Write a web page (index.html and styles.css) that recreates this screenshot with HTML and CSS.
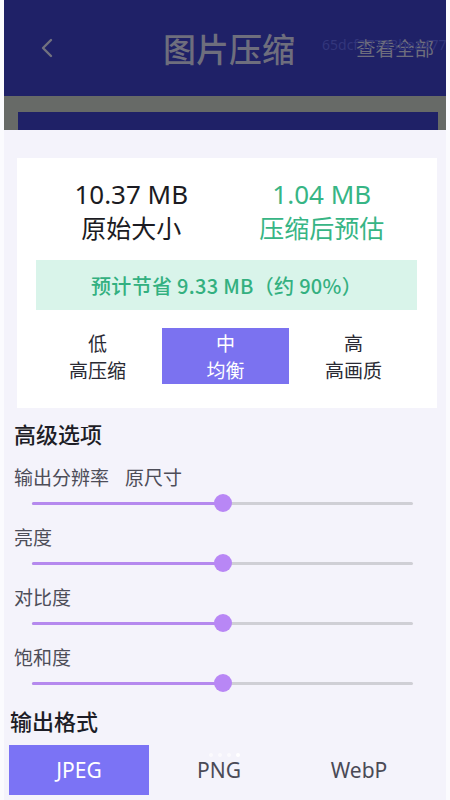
FILE: index.html
```html
<!DOCTYPE html>
<html lang="zh-CN">
<head>
<meta charset="utf-8">
<title>图片压缩</title>
<link rel="stylesheet" href="styles.css">
</head>
<body>
<div class="screen">
  <header class="topbar">
    <svg class="back" width="14" height="20" viewBox="0 0 14 20"><polyline points="11,2 3,10 11,18" fill="none" stroke="#72727f" stroke-width="2.4" stroke-linecap="round" stroke-linejoin="round"/></svg>
    <h1 class="title">图片压缩</h1>
    <span class="view-all">查看全部</span>
    <span class="task-id">65dcf37743bea477</span>
  </header>
  <div class="band"><div class="band-inner"></div></div>
  <main class="content">
    <section class="card">
      <div class="sizes">
        <div class="size">
          <div class="size-num">10.37 MB</div>
          <div class="size-label">原始大小</div>
        </div>
        <div class="size green">
          <div class="size-num">1.04 MB</div>
          <div class="size-label">压缩后预估</div>
        </div>
      </div>
      <div class="saving">预计节省 9.33 MB（约 90%）</div>
      <div class="levels">
        <div class="level"><span>低</span><span>高压缩</span></div>
        <div class="level active"><span>中</span><span>均衡</span></div>
        <div class="level"><span>高</span><span>高画质</span></div>
      </div>
    </section>

    <h2 class="section-title adv">高级选项</h2>
    <div class="options">
      <div class="option">
        <div class="opt-label">输出分辨率<span class="opt-value">原尺寸</span></div>
        <div class="slider"><div class="track"><div class="fill" style="width:50%"></div><div class="thumb" style="left:50%"></div></div></div>
      </div>
      <div class="option">
        <div class="opt-label">亮度</div>
        <div class="slider"><div class="track"><div class="fill" style="width:50%"></div><div class="thumb" style="left:50%"></div></div></div>
      </div>
      <div class="option">
        <div class="opt-label">对比度</div>
        <div class="slider"><div class="track"><div class="fill" style="width:50%"></div><div class="thumb" style="left:50%"></div></div></div>
      </div>
      <div class="option">
        <div class="opt-label">饱和度</div>
        <div class="slider"><div class="track"><div class="fill" style="width:50%"></div><div class="thumb" style="left:50%"></div></div></div>
      </div>
    </div>

    <h2 class="section-title fmt">输出格式</h2>
    <div class="formats">
      <div class="format active">JPEG</div>
      <div class="format">PNG</div>
      <div class="format">WebP</div>
      <div class="dots"><i></i><i></i><i></i><i class="on"></i></div>
    </div>
  </main>
</div>
</body>
</html>
```

FILE: styles.css
```css
* { box-sizing: border-box; }
html, body { margin: 0; padding: 0; }
body {
  background: #fbfbfe;
  font-family: "Noto Sans CJK SC", "Noto Sans", sans-serif;
  width: 450px;
  height: 800px;
  overflow: hidden;
}
.screen {
  margin-left: 4px;
  width: 442px;
  height: 800px;
  background: #f4f3fb;
  display: flex;
  flex-direction: column;
}
.topbar {
  position: relative;
  height: 96px;
  flex: none;
  background: #1f2167;
  display: flex;
  align-items: center;
  padding-left: 36px;
  padding-right: 12px;
  overflow: hidden;
}
.back { flex: none; }
.title {
  margin: 0 0 0 109px;
  font-size: 33px;
  font-weight: 500;
  color: #6e6e7d;
  line-height: 40px;
}
.view-all {
  margin-left: auto;
  font-size: 19.5px;
  color: #6e6e7d;
  line-height: 28px;
}
.task-id {
  position: absolute;
  left: 318px;
  top: 36px;
  font-family: "Noto Sans", sans-serif;
  font-size: 14px;
  line-height: 18px;
  color: #33367c;
  white-space: nowrap;
}
.band {
  height: 34px;
  flex: none;
  background: #676a67;
  padding: 16px 8px 0 14px;
}
.band-inner {
  height: 18px;
  background: #1f2167;
}
.content {
  flex: 1;
  display: flex;
  flex-direction: column;
}
.card {
  margin: 28px 0 0 13px;
  width: 420px;
  background: #ffffff;
  padding: 18px 20px 24px 19px;
}
.sizes { display: flex; }
.size {
  flex: 1;
  text-align: center;
  color: #1b1b22;
}
.size-num {
  font-family: "Noto Sans", sans-serif;
  font-size: 26px;
  line-height: 36px;
}
.size-label { font-size: 25px; line-height: 30px; }
.size.green { color: #37b585; }
.saving {
  margin-top: 18px;
  height: 50px;
  background: #d9f4ea;
  color: #33b080;
  font-size: 20px;
  font-weight: 500;
  letter-spacing: 0.3px;
  display: flex;
  align-items: center;
  justify-content: center;
}
.levels {
  margin-top: 18px;
  display: grid;
  grid-template-columns: repeat(3, 1fr);
  gap: 1px;
  margin-left: -2px;
}
.level {
  height: 56px;
  display: flex;
  flex-direction: column;
  align-items: center;
  justify-content: center;
  font-size: 19px;
  line-height: 27px;
  color: #2a2a33;
}
.level.active {
  background: #7b72f0;
  color: #ffffff;
}
.section-title {
  margin: 0;
  font-size: 22px;
  font-weight: 500;
  line-height: 30px;
  color: #1d1d26;
}
.section-title.adv { margin: 10px 0 0 10px; }
.options {
  margin-top: 16px;
  display: flex;
  flex-direction: column;
}
.option { margin-bottom: 11px; }
.opt-label {
  padding-left: 10px;
  font-size: 19px;
  line-height: 26px;
  color: #4d4d58;
}
.opt-value { margin-left: 16px; }
.slider {
  margin: 3px 0 0 28px;
  width: 381px;
  height: 20px;
  display: flex;
  align-items: center;
}
.track {
  position: relative;
  width: 100%;
  height: 3px;
  background: #cfcfd5;
  border-radius: 2px;
}
.fill {
  height: 3px;
  background: #b589ee;
  border-radius: 2px;
}
.thumb {
  position: absolute;
  top: 50%;
  width: 18px;
  height: 18px;
  margin: -9px 0 0 -9px;
  border-radius: 50%;
  background: #b887f5;
}
.section-title.fmt { margin: 1px 0 0 6px; }
.formats {
  position: relative;
  margin: 10px 0 0 5px;
  width: 420px;
  height: 50px;
  display: grid;
  grid-template-columns: repeat(3, 1fr);
}
.format {
  display: flex;
  align-items: center;
  justify-content: center;
  font-family: "Noto Sans", sans-serif;
  font-size: 21px;
  color: #4a4a56;
}
.format.active {
  background: #7b73f5;
  color: #ffffff;
}
.dots {
  position: absolute;
  left: 200px;
  top: 8px;
  display: flex;
  gap: 5px;
}
.dots i {
  width: 4px;
  height: 4px;
  border-radius: 50%;
  background: rgba(255, 255, 255, 0.6);
}
.dots i.on { background: #ffffff; }
```
